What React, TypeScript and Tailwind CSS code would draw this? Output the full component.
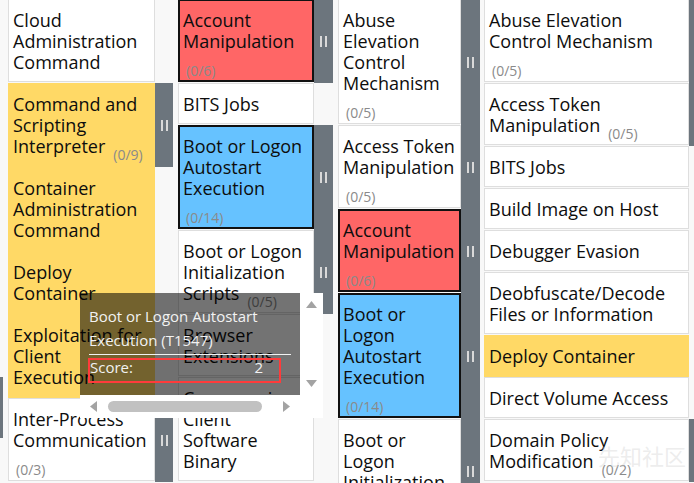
import React from 'react';

type Tone = 'white' | 'red' | 'blue' | 'yellow';

interface Technique {
    lines: string[];
    count?: string;
    countOwnLine?: boolean;
    tone?: Tone;
    handle?: boolean;
}

interface Column {
    cellW: string;
    handleW: string;
    gap: string;
    items: Technique[];
}

const toneClass: Record<Tone, string> = {
    white: 'bg-white border border-[#dedede] pt-[10px] pb-[8px] pl-[4px]',
    yellow: 'bg-[#ffd966] border border-[#ffd966] pt-[10px] pb-[8px] pl-[4px]',
    red: 'bg-[#ff6666] border-2 border-[#111111] pt-[9px] pb-[7px] pl-[3px]',
    blue: 'bg-[#66c2ff] border-2 border-[#111111] pt-[9px] pb-[7px] pl-[3px]',
};

const columns: Column[] = [
    {
        cellW: 'w-[147px]',
        handleW: 'w-[18px]',
        gap: 'ml-[5px]',
        items: [
            { lines: ['Cloud', 'Administration', 'Command'] },
            { lines: ['Command and', 'Scripting', 'Interpreter'], count: '(0/9)', tone: 'yellow', handle: true },
            { lines: ['Container', 'Administration', 'Command'], tone: 'yellow' },
            { lines: ['Deploy', 'Container'], tone: 'yellow' },
            { lines: ['Exploitation for', 'Client', 'Execution'], tone: 'yellow' },
            { lines: ['Inter-Process', 'Communication'], count: '(0/3)', countOwnLine: true, handle: true },
        ],
    },
    {
        cellW: 'w-[136px]',
        handleW: 'w-[19px]',
        gap: 'ml-[5px]',
        items: [
            { lines: ['Account', 'Manipulation'], count: '(0/6)', countOwnLine: true, tone: 'red', handle: true },
            { lines: ['BITS Jobs'] },
            { lines: ['Boot or Logon', 'Autostart', 'Execution'], count: '(0/14)', countOwnLine: true, tone: 'blue', handle: true },
            { lines: ['Boot or Logon', 'Initialization', 'Scripts'], count: '(0/5)', handle: true },
            { lines: ['Browser', 'Extensions'] },
            { lines: ['Compromise', 'Client', 'Software', 'Binary'] },
        ],
    },
    {
        cellW: 'w-[123px]',
        handleW: 'w-[19px]',
        gap: 'ml-[5px]',
        items: [
            { lines: ['Abuse', 'Elevation', 'Control', 'Mechanism'], count: '(0/5)', countOwnLine: true, handle: true },
            { lines: ['Access Token', 'Manipulation'], count: '(0/5)', countOwnLine: true, handle: true },
            { lines: ['Account', 'Manipulation'], count: '(0/6)', countOwnLine: true, tone: 'red', handle: true },
            { lines: ['Boot or', 'Logon', 'Autostart', 'Execution'], count: '(0/14)', countOwnLine: true, tone: 'blue', handle: true },
            { lines: ['Boot or', 'Logon', 'Initialization', 'Scripts'], count: '(0/5)', handle: true },
        ],
    },
    {
        cellW: 'w-[205px]',
        handleW: 'w-[18px]',
        gap: 'ml-[4px]',
        items: [
            { lines: ['Abuse Elevation', 'Control Mechanism'], count: '(0/5)', countOwnLine: true, handle: true },
            { lines: ['Access Token', 'Manipulation'], count: '(0/5)', handle: true },
            { lines: ['BITS Jobs'] },
            { lines: ['Build Image on Host'] },
            { lines: ['Debugger Evasion'] },
            { lines: ['Deobfuscate/Decode', 'Files or Information'] },
            { lines: ['Deploy Container'], tone: 'yellow' },
            { lines: ['Direct Volume Access'] },
            { lines: ['Domain Policy', 'Modification'], count: '(0/2)', handle: true },
        ],
    },
];

// sub-technique counter sits a little below the baseline, like a <sub>
const Count: React.FC<{ text: string; ownLine?: boolean }> = ({ text, ownLine }) => (
    <span className={`relative top-[7px] text-[14px] leading-[14px] text-[#8a8a8a] ${ownLine ? 'ml-[3px]' : 'ml-[8px]'}`}>
        {text}
    </span>
);

const Handle: React.FC<{ w: string }> = ({ w }) => (
    <div className={`${w} shrink-0 bg-[#6c757d] flex items-center justify-center gap-[3px]`}>
        <span className="w-[2px] h-[11px] bg-[#d9d9d9]" />
        <span className="w-[2px] h-[11px] bg-[#d9d9d9]" />
    </div>
);

const Row: React.FC<{ t: Technique; cellW: string; handleW: string }> = ({ t, cellW, handleW }) => {
    const tone = t.tone ?? 'white';
    const last = t.lines.length - 1;
    return (
        <div className="flex">
            <div className={`${cellW} shrink-0 pb-px ${tone === 'yellow' ? 'bg-[#ffd966]' : ''}`}>
                <div className={`${toneClass[tone]} text-[18px] leading-[21px] text-[#0d0d0d]`}>
                    {t.lines.map((line, i) => (
                        <div key={i} className="h-[21px] whitespace-nowrap">
                            {line}
                            {t.count && !t.countOwnLine && i === last && <Count text={t.count} />}
                        </div>
                    ))}
                    {t.count && t.countOwnLine && (
                        <div className="h-[21px] whitespace-nowrap">
                            <Count text={t.count} ownLine />
                        </div>
                    )}
                </div>
            </div>
            {t.handle ? <Handle w={handleW} /> : <div className={`${handleW} shrink-0`} />}
        </div>
    );
};

const Tooltip: React.FC = () => (
    <div className="absolute left-[80px] top-[293px] flex flex-col">
        <div className="flex">
            <div className="w-[220px] h-[102px] bg-black/55 px-[9px] pt-[11px] text-[15px] leading-[24px] text-[#f2f2f2]">
                <div className="whitespace-nowrap">Boot or Logon Autostart</div>
                <div className="whitespace-nowrap">Execution (T1547)</div>
                <div className="mt-[2px] border-t border-[#f2f2f2]" />
                <div className="mt-[3px] -ml-px w-[193px] h-[25px] border-2 border-[#ff3b3b] flex justify-between pr-[16px] leading-[14px]">
                    <span>Score:</span>
                    <span>2</span>
                </div>
            </div>
            <div className="w-[23px] h-[102px] bg-white flex flex-col items-center justify-between py-[8px]">
                <svg width="11" height="7" viewBox="0 0 11 7"><polygon points="5.5,0 11,7 0,7" fill="#a3a3a3" /></svg>
                <svg width="11" height="7" viewBox="0 0 11 7"><polygon points="0,0 11,0 5.5,7" fill="#a3a3a3" /></svg>
            </div>
        </div>
        <div className="w-[243px] h-[23px] bg-white flex items-center pl-[10px]">
            <svg width="7" height="11" viewBox="0 0 7 11"><polygon points="7,0 7,11 0,5.5" fill="#a3a3a3" /></svg>
            <div className="ml-[11px] w-[154px] h-[11px] rounded-full bg-[#c1c1c1]" />
            <svg className="ml-[21px]" width="7" height="11" viewBox="0 0 7 11"><polygon points="0,0 7,5.5 0,11" fill="#a3a3a3" /></svg>
        </div>
    </div>
);

const App: React.FC = () => {
    return (
        <div className="relative w-[694px] h-[483px] overflow-hidden bg-[#f8f8f8] font-['Open_Sans','Noto_Sans',sans-serif]">
            <div className="flex items-start -mt-px">
                {/* edge of the previous tactic column */}
                <div className="w-[3px] shrink-0 flex flex-col">
                    <div className="h-[378px]" />
                    <div className="h-[61px] bg-[#6c757d]" />
                </div>
                {columns.map((col, ci) => (
                    <div key={ci} className={`${col.gap} shrink-0 flex flex-col`}>
                        {col.items.map((t, i) => (
                            <Row key={i} t={t} cellW={col.cellW} handleW={col.handleW} />
                        ))}
                    </div>
                ))}
            </div>

            <Tooltip />

            <div className="absolute left-[598px] top-[442px] text-[22px] leading-[26px] text-[#d0d0d0]/40 font-['Noto_Sans_CJK_SC',sans-serif] pointer-events-none">
                先知社区
            </div>
        </div>
    );
};

export default App;
